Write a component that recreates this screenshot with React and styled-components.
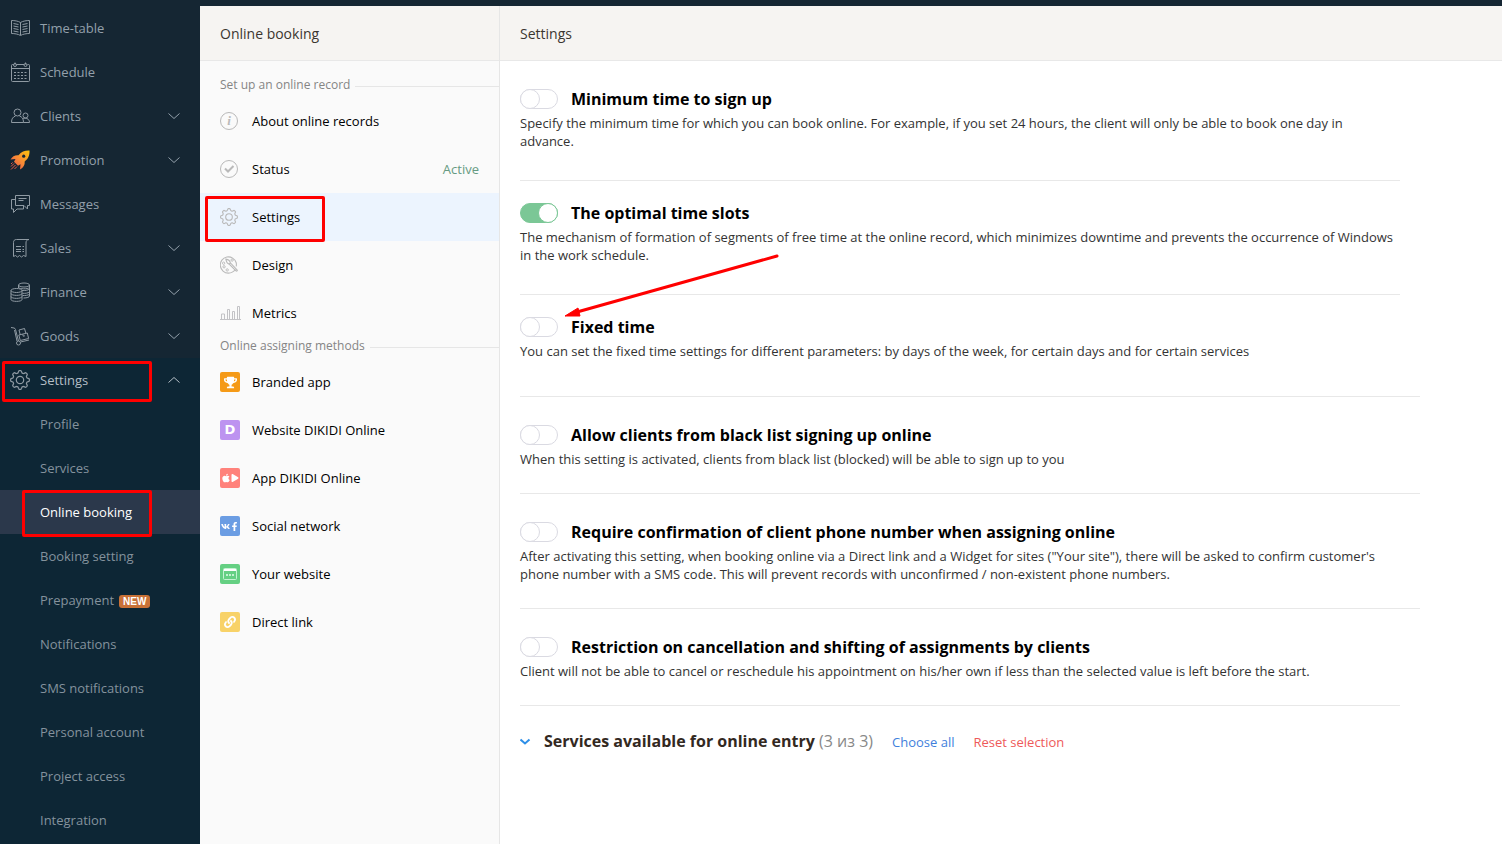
import React, { useState } from 'react';
import styled, { createGlobalStyle, css } from 'styled-components';
import { FaApple, FaFacebookF, FaLink, FaPlay, FaTrophy, FaVk } from 'react-icons/fa';

const gearPath = (() => {
    const points = [];

    for(let i = 0; i <= 96; i++){
        const angle = (i / 96) * Math.PI * 2;
        const radius = 8.3 + 1.1 * Math.tanh(2.2 * Math.cos(8 * angle));
        points.push(`${(10 + radius * Math.cos(angle)).toFixed(2)} ${(10 + radius * Math.sin(angle)).toFixed(2)}`);
    }

    return `M${points.join('L')}Z`;
})();

const GearIcon = ({ size }) => (
    <Line viewBox="0 0 20 20" $size={size}>
        <path strokeWidth="1.2" d={gearPath} />
        <circle strokeWidth="1.2" cx="10" cy="10" r="3.7" />
    </Line>
);

const BookIcon = () => (
    <Line viewBox="0 0 20 20">
        <path d="M10.5 4.5C8 3 4.5 2.5 1.5 2.5v13c3 0 6.5.5 9 2 2.5-1.5 6-2 9-2v-13c-3 0-6.5.5-9 2zM10.5 4.5v12.5" />
        <path d="M3.5 5.5l5 1M3.5 8l5 1M3.5 10.5l5 1M3.5 13l5 1M17.5 5.5l-5 1M17.5 8l-5 1M17.5 10.5l-5 1M17.5 13l-5 1" />
    </Line>
);

const CalendarIcon = () => (
    <Line viewBox="0 0 20 20">
        <path d="M3.5 2.5h-1a1 1 0 0 0-1 1v15a1 1 0 0 0 1 1h16a1 1 0 0 0 1-1v-15a1 1 0 0 0-1-1h-1M6.5 2.5h7.500M1.5 6.5h18" />
        <circle cx="5" cy="3" r="1.5" />
        <circle cx="15.5" cy="3" r="1.5" />
        <path d="M5 .5v2M15.5 .5v2" />
        <path strokeDasharray="2 1.5" d="M4 10.500h13M4 13.500h13M4 16.500h13" />
    </Line>
);

const ClientsIcon = () => (
    <Line viewBox="0 0 20 20">
        <circle cx="7.5" cy="6.5" r="3.5" />
        <path d="M5.5 10C3 11 1.500 12.500 1.500 16.500h12c0-4-1.500-5.500-4-6.500" />
        <circle cx="15.5" cy="9.5" r="2.5" />
        <path d="M13 12.500c1-.5 3-.5 4 0 1.500.8 2.500 2 2.500 4h-6" />
    </Line>
);

const RocketIcon = () => (
    <svg width="20" height="20" viewBox="0 0 20 20" aria-hidden="true">
        <defs>
            <linearGradient id="rocket" x1="1" y1="0" x2="0" y2="1">
                <stop offset="0" stopColor="#fdc20a" />
                <stop offset=".5" stopColor="#f98c35" />
                <stop offset="1" stopColor="#ea4b4d" />
            </linearGradient>
        </defs>
        <path fill="url(#rocket)" d="M19.500.5C15 .3 11.500 1.500 8.500 5.200 5 4.800 2.500 6.200.5 9.500l5-.5-1.500 2.700 4 4 2.500-1.500L10 19.500c3.500-2 5-4.500 4.700-8C18.500 8.500 19.700 5 19.500.5z" />
        <circle cx="13.7" cy="6.2" r="1.6" fill="#152633" />
        <path stroke="#ea5a48" strokeWidth="1" fill="none" d="M4 13.500l-3 3M5.500 15l-4.500 4.500M7 16.500l-2.500 2.500M2.500 12.500l-1.500 1.500" />
    </svg>
);

const MessagesIcon = () => (
    <Line viewBox="0 0 20 20">
        <path d="M5.500 1.500h14v10h-2v3.500l-3.500-3.500H5.500z" />
        <path d="M5.500 5.500h-4v9.500h2v3.500l3.500-3.500h6.500v-3M8.500 4.500h8M8.500 6.500h5" />
    </Line>
);

const SalesIcon = () => (
    <Line viewBox="0 0 20 20">
        <path d="M19 1.500H6.500c-2 0-3 1-3 3v14l2-1 2 1.500 2-1.500 2 1.500 2-1.500 2.500 1v-13.500c0-2 .5-3 3-3.500z" />
        <path d="M6 8.500h5M6 11.500h5M6 13.500h5M12.500 8.500h1.500M12.500 11.500h1.500M12.500 13.500h1.500" />
    </Line>
);

const FinanceIcon = () => (
    <Line viewBox="0 0 20 20">
        <ellipse cx="14" cy="3" rx="5.5" ry="2" />
        <path d="M8.500 3v3M19.500 3v11c0 1.200-2.500 2-6 2M8.500 5.500c1 1.500 9 2 11 0M12 8.500c3 .3 6-.2 7.500-1.500M12.500 11.300c3 .2 5.500-.2 7-1.300M12.500 13.500c3 .2 5.500-.2 7-1.300" />
        <ellipse cx="6.5" cy="8.5" rx="5.5" ry="2" />
        <path d="M1 8.500v9c0 2.500 11 2.500 11 0v-9M1 11.500c0 2.500 11 2.500 11 0M1 14.500c0 2.500 11 2.500 11 0" />
    </Line>
);

const GoodsIcon = () => (
    <Line viewBox="0 0 20 20">
        <path d="M1 1.500l3 .5c1 .3 1.300.8 1.500 1.500l3 11.500M4.500 4l2.500 11" />
        <circle cx="8.5" cy="17" r="2" />
        <path d="M10.500 16l8.500-2M9 4l5.500-1.500 1.300 4.500M9 4l1.300 5M8.800 9l8.500-2 1.300 5.500-8.300 2zM12.800 8.200l.4 2 1.700-.4" />
    </Line>
);

const PaletteIcon = () => (
    <Line viewBox="0 0 20 20" $size={18}>
        <path strokeWidth="1.2" d="M17 15c-1.500 2-4 4-7.500 4a9 9 0 1 1 8.500-11.500c.4 1.500.3 2.500 0 4" />
        <circle cx="4" cy="8" r="1.3" />
        <circle cx="4.5" cy="12" r="1.3" />
        <circle cx="8" cy="15.500" r="1.3" />
        <circle cx="13.5" cy="4.500" r="1.3" />
        <path strokeWidth="1.200" d="M6.500 3.500c.5 3 1.500 5 3.700 5.500l7.500 7.500c1 .8 2-.2 1.200-1.200L11.500 7.500C11 5.200 9.500 4 6.500 3.500zM10.200 9l1.500-1.500" />
    </Line>
);

const ChartIcon = () => (
    <svg width="22" height="20" viewBox="0 0 22 20" fill="none" stroke="#c3c3c6" aria-hidden="true">
        <path d="M0 16.500h21M1.500 16v-5h3v5M7.500 16V6.500h2v9.500M12.500 16V8.500h2v7.500M17.500 16V3.500h2v12.500" />
    </svg>
);

const CheckIcon = () => (
    <Line viewBox="0 0 20 20">
        <circle cx="9" cy="10" r="8.5" />
        <path strokeWidth="2" d="M5 9.500l3 3 5.500-5.500" />
    </Line>
);

const InfoIcon = () => (
    <InfoCircle>i</InfoCircle>
);

const ChevronIcon = ({ up, small }) => (
    <svg width="12" height="12" viewBox="0 0 12 12" fill="none" stroke="currentColor" strokeWidth={small ? 2 : 1} aria-hidden="true">
        <path d={small ? 'M.5 4.500l4.500 4 4.500-4' : up ? 'M.5 8.500L6 3.500 11.500 8.500' : 'M.5 3.500L6 8.500l5.500-5'} />
    </svg>
);

const BrowserIcon = () => (
    <svg width="14" height="12" viewBox="0 0 14 12" aria-hidden="true">
        <rect x=".5" y=".5" width="13" height="11" rx="1" fill="none" stroke="#c4f3d2" />
        <path d="M1 1h12v2H1z" fill="#fff" />
        <path d="M3 7h8" stroke="#c4f3d2" strokeWidth="2" strokeDasharray="2 1" />
    </svg>
);

const mainMenu = [
    { label: 'Time-table', icon: <BookIcon /> },
    { label: 'Schedule', icon: <CalendarIcon /> },
    { label: 'Clients', icon: <ClientsIcon />, nested: true },
    { label: 'Promotion', icon: <RocketIcon />, nested: true },
    { label: 'Messages', icon: <MessagesIcon /> },
    { label: 'Sales', icon: <SalesIcon />, nested: true },
    { label: 'Finance', icon: <FinanceIcon />, nested: true },
    { label: 'Goods', icon: <GoodsIcon />, nested: true }
];

const settingsMenu = [
    { label: 'Profile' },
    { label: 'Services' },
    { label: 'Online booking', active: true },
    { label: 'Booking setting' },
    { label: 'Prepayment', badge: 'NEW' },
    { label: 'Notifications' },
    { label: 'SMS notifications' },
    { label: 'Personal account' },
    { label: 'Project access' },
    { label: 'Integration' }
];

const setupMenu = [
    { label: 'About online records', icon: <InfoIcon /> },
    { label: 'Status', icon: <CheckIcon />, status: 'Active' },
    { label: 'Settings', icon: <GearIcon size={18} />, active: true },
    { label: 'Design', icon: <PaletteIcon /> },
    { label: 'Metrics', icon: <ChartIcon /> }
];

const methodsMenu = [
    { label: 'Branded app', color: '#f59a17', icon: <FaTrophy size={13} /> },
    { label: 'Website DIKIDI Online', color: '#bd93f0', icon: 'D' },
    { label: 'App DIKIDI Online', color: '#ff827b', icon: <><FaApple size={10} /><FaPlay size={8} /></> },
    { label: 'Social network', color: '#6b9de3', icon: <><FaVk size={9} /><FaFacebookF size={9} /></> },
    { label: 'Your website', color: '#65d083', icon: <BrowserIcon /> },
    { label: 'Direct link', color: '#f8d268', icon: <FaLink size={12} /> }
];

const options = [
    {
        id: 'minimum',
        title: 'Minimum time to sign up',
        text: 'Specify the minimum time for which you can book online. For example, if you set 24 hours, the client will only be able to book one day in advance.'
    },
    {
        id: 'optimal',
        title: 'The optimal time slots',
        text: 'The mechanism of formation of segments of free time at the online record, which minimizes downtime and prevents the occurrence of Windows in the work schedule.',
        on: true
    },
    {
        id: 'fixed',
        title: 'Fixed time',
        text: 'You can set the fixed time settings for different parameters: by days of the week, for certain days and for certain services',
        wide: true,
        arrow: true
    },
    {
        id: 'blacklist',
        title: 'Allow clients from black list signing up online',
        text: 'When this setting is activated, clients from black list (blocked) will be able to sign up to you',
        wide: true,
        spaced: true
    },
    {
        id: 'confirm',
        title: 'Require confirmation of client phone number when assigning online',
        text: 'After activating this setting, when booking online via a Direct link and a Widget for sites ("Your site"), there will be asked to confirm customer\'s phone number with a SMS code. This will prevent records with unconfirmed / non-existent phone numbers.',
        wide: true,
        spaced: true
    },
    {
        id: 'restrict',
        title: 'Restriction on cancellation and shifting of assignments by clients',
        text: 'Client will not be able to cancel or reschedule his appointment on his/her own if less than the selected value is left before the start.',
        spaced: true
    }
];

function Option({ option }){

    const [on, setOn] = useState(!!option.on);

    return (
        <OptionBlock $wide={option.wide} $spaced={option.spaced}>
            <OptionTitle htmlFor={option.id}>
                <Toggle id={option.id} type="checkbox" checked={on} onChange={() => setOn(!on)} />
                {option.title}
            </OptionTitle>
            <OptionText>{option.text}</OptionText>
            {option.arrow &&
                <Arrow width="216" height="66" viewBox="0 0 216 66" aria-hidden="true">
                    <path d="M12 59L212 3" stroke="#f00" strokeWidth="3" strokeLinecap="round" />
                    <path d="M0 63l13-8 2 8z" fill="#f00" stroke="#f00" />
                </Arrow>
            }
        </OptionBlock>
    );
}

export default function App(){
    return (
        <>
            <GlobalStyle />
            <Page>
                <Sidebar>
                    {mainMenu.map(item => (
                        <MenuRow key={item.label} href="#">
                            <MenuIcon>{item.icon}</MenuIcon>
                            {item.label}
                            {item.nested && <MenuChevron><ChevronIcon /></MenuChevron>}
                        </MenuRow>
                    ))}
                    <Submenu>
                        <MenuRow href="#" $open>
                            <MenuIcon><GearIcon /></MenuIcon>
                            Settings
                            <MenuChevron><ChevronIcon up /></MenuChevron>
                            <Mark $top={3} $left={2} $width={150} $height={41} />
                        </MenuRow>
                        {settingsMenu.map(item => (
                            <SubmenuRow key={item.label} href="#" $active={item.active}>
                                {item.label}
                                {item.badge && <Badge>{item.badge}</Badge>}
                                {item.active && <Mark $top={0} $left={22} $width={130} $height={47} />}
                            </SubmenuRow>
                        ))}
                    </Submenu>
                </Sidebar>

                <Panel>
                    <Header>Online booking</Header>
                    <PanelBody>
                        <GroupLabel>Set up an online record</GroupLabel>
                        {setupMenu.map(item => (
                            <PanelRow key={item.label} href="#" $active={item.active}>
                                <PanelIcon>{item.icon}</PanelIcon>
                                {item.label}
                                {item.status && <Status>{item.status}</Status>}
                                {item.active && <Mark $top={3} $left={5} $width={120} $height={46} />}
                            </PanelRow>
                        ))}
                        <GroupLabel>Online assigning methods</GroupLabel>
                        {methodsMenu.map(item => (
                            <PanelRow key={item.label} href="#">
                                <PanelIcon><Tile $color={item.color}>{item.icon}</Tile></PanelIcon>
                                {item.label}
                            </PanelRow>
                        ))}
                    </PanelBody>
                </Panel>

                <Main>
                    <Header>Settings</Header>
                    <MainBody>
                        {options.map(option => <Option key={option.id} option={option} />)}
                        <Services>
                            <Expand aria-label="Expand services"><ChevronIcon small /></Expand>
                            <ServicesTitle>Services available for online entry <span>(3 из 3)</span></ServicesTitle>
                            <TextButton $color="#3f7fdc">Choose all</TextButton>
                            <TextButton $color="#ee5a5a">Reset selection</TextButton>
                        </Services>
                    </MainBody>
                </Main>
            </Page>
        </>
    );
}

const GlobalStyle = createGlobalStyle`
    *, *::before, *::after {
        box-sizing: border-box;
    }

    body {
        margin: 0;
        background: #152633;
        color: #333;
        font: 13px/18px "Open Sans", "Noto Sans", sans-serif;
    }

    button {
        padding: 0;
        border: 0;
        background: none;
        font: inherit;
        cursor: pointer;
    }

    a {
        color: inherit;
        text-decoration: none;
    }
`;

const Page = styled.div`
    display: flex;
    min-height: 100vh;
    padding-top: 6px;
`;

const Sidebar = styled.nav`
    display: flex;
    flex-direction: column;
    flex: 0 0 200px;
    color: #93a0ab;
`;

const rowBase = css`
    position: relative;
    display: flex;
    align-items: center;
`;

const MenuRow = styled.a`
    ${rowBase}
    height: 44px;
    padding: 0 20px 0 10px;

    ${props => props.$open && css`
        color: #b4bec6;
    `}
`;

const MenuIcon = styled.span`
    display: flex;
    width: 30px;
    color: #8f9aa3;
`;

const MenuChevron = styled.span`
    display: flex;
    margin-left: auto;
`;

const Submenu = styled.div`
    flex: 1;
    background: #0d2635;
`;

const SubmenuRow = styled.a`
    ${rowBase}
    height: 44px;
    padding-left: 40px;
    color: #84929d;

    ${props => props.$active && css`
        background: #2b384b;
        color: #fff;
    `}
`;

const Badge = styled.span`
    margin: 2px 0 0 5px;
    padding: 0 4px;
    border-radius: 3px;
    background: #c87137;
    color: #fff;
    font: bold 10px/13px "Liberation Sans", sans-serif;
`;

/* red frame drawn over the row it belongs to */
const Mark = styled.span`
    position: absolute;
    z-index: 1;
    top: ${props => props.$top}px;
    left: ${props => props.$left}px;
    width: ${props => props.$width}px;
    height: ${props => props.$height}px;
    border: 3px solid #f00;
    border-radius: 2px;
    pointer-events: none;
`;

const Line = styled.svg.attrs({ 'aria-hidden': true })`
    width: ${props => props.$size || 20}px;
    height: ${props => props.$size || 20}px;
    fill: none;
    stroke: currentColor;
    stroke-width: 1;
`;

const Panel = styled.aside`
    flex: 0 0 300px;
    border-right: 1px solid #e6e6e6;
    background: #fafafa;
`;

const Header = styled.header`
    height: 55px;
    padding: 0 20px;
    border-bottom: 1px solid #e8e8e8;
    background: #f6f4f2;
    color: #3b3630;
    font-size: 14px;
    line-height: 55px;
`;

const PanelBody = styled.div`
    padding-top: 15px;
`;

const GroupLabel = styled.div`
    display: flex;
    height: 21px;
    padding-left: 20px;
    color: #858585;
    font-size: 12px;

    &::after {
        content: "";
        flex: 1;
        margin: 10px 0 0 5px;
        border-top: 1px solid #e6e6e6;
    }
`;

const PanelRow = styled.a`
    ${rowBase}
    height: 48px;
    padding: 0 20px;
    background: ${props => props.$active ? '#ecf4fe' : 'transparent'};
    color: #000;
`;

const PanelIcon = styled.span`
    display: flex;
    width: 32px;
    color: #b9b9b9;
`;

const InfoCircle = styled.i`
    width: 18px;
    height: 18px;
    border: 1px solid #b9b9b9;
    border-radius: 50%;
    font: italic bold 13px/16px "Liberation Serif", serif;
    text-align: center;
`;

const Tile = styled.span`
    display: flex;
    align-items: center;
    justify-content: center;
    width: 20px;
    height: 20px;
    border-radius: 2px;
    background: ${props => props.$color};
    color: #fff;
    font: bold 13px/20px "DejaVu Sans", sans-serif;
`;

const Status = styled.span`
    margin-left: auto;
    color: #669a82;
`;

const Main = styled.main`
    flex: 1;
    min-width: 0;
    background: #fff;
`;

const MainBody = styled.div`
    padding: 6px 20px 20px;
`;

const OptionBlock = styled.section`
    position: relative;
    max-width: ${props => props.$wide ? 900 : 880}px;
    padding: 17px 0 30px;
    border-bottom: 1px solid #e8e8e8;

    ${props => props.$wide && css`
        padding-bottom: 36px;
    `}

    ${props => props.$spaced && css`
        padding: 23px 0 25px;
    `}
`;

const OptionTitle = styled.label`
    display: flex;
    align-items: center;
    gap: 13px;
    height: 30px;
    color: #000;
    font-size: 16px;
    font-weight: 700;
`;

const OptionText = styled.p`
    max-width: 876px;
    margin: 0;
`;

const Toggle = styled.input`
    appearance: none;
    flex: none;
    width: 38px;
    height: 20px;
    margin: 0;
    border: 1px solid #dadae2;
    border-radius: 10px;
    background: #fff;
    cursor: pointer;

    &::before {
        content: "";
        display: block;
        width: 20px;
        height: 20px;
        margin: -1px;
        border: 1px solid #dadae2;
        border-radius: 50%;
        background: #fff;
    }

    &:checked {
        border-color: #7bc796;
        background: #7bc796;
    }

    &:checked::before {
        margin-left: 17px;
        border-color: #7bc796;
    }
`;

const Arrow = styled.svg`
    position: absolute;
    top: -42px;
    left: 45px;
    fill: none;
    pointer-events: none;
`;

const Services = styled.div`
    display: flex;
    align-items: center;
    height: 70px;
`;

const Expand = styled.button`
    display: flex;
    width: 24px;
    color: #2e8fe8;
`;

const ServicesTitle = styled.h2`
    margin: 0;
    color: #33291f;
    font-size: 16px;
    font-weight: 700;

    span {
        color: #888;
        font-weight: 400;
    }
`;

const TextButton = styled.button`
    margin: 2px 0 0 19px;
    color: ${props => props.$color};
`;
